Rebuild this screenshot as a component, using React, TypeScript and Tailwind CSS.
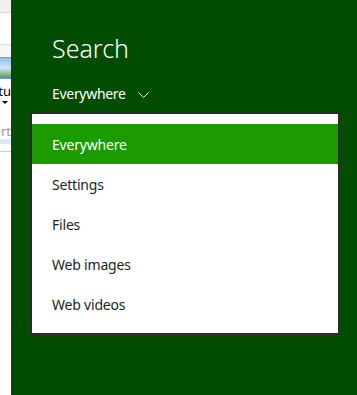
import React from 'react';

const items = ['Everywhere', 'Settings', 'Files', 'Web images', 'Web videos'];

// sliver of the desktop window behind the charm
const BackWindow: React.FC = () => (
  <div className="w-[11px] h-full shrink-0 overflow-hidden bg-white flex flex-col">
    <div className="h-[13px] bg-[#f0f0f0] border-b border-[#d9d9d9]" />
    <div className="h-[32px] bg-white border-b border-[#dcdcdc]" />
    <div className="h-[12px] bg-[#f7f7f7]" />
    <div className="h-[22px] border-y border-[#6d9ed8] bg-gradient-to-b from-[#8fc0ea] via-[#cfe4f3] to-[#5f9a4c]" />
    <div className="h-[4px]" />
    <div className="flex justify-end h-[16px]">
      <span className="whitespace-nowrap text-[13px] leading-[16px] text-black">Pictu</span>
    </div>
    <div className="flex justify-end h-[8px] pr-[3px] pt-[2px]">
      <div className="w-0 h-0 border-l-[3px] border-r-[3px] border-t-[3px] border-l-transparent border-r-transparent border-t-black" />
    </div>
    <div className="h-[16px]" />
    <div className="flex justify-end h-[16px]">
      <span className="whitespace-nowrap text-[13px] leading-[16px] text-[#9a9a9a]">Insert</span>
    </div>
    <div className="h-[5px] bg-[#dbe9f5]" />
    <div className="h-[7px]" />
    <div className="h-px bg-[#cfcfcf]" />
  </div>
);

const App: React.FC = () => {
  return (
    <div className="w-[357px] h-[395px] flex overflow-hidden" style={{ fontFamily: '"Noto Sans", sans-serif' }}>
      <BackWindow />
      <div className="flex-1 bg-[#004d00] pt-[32px]">
        <h1 className="pl-[41px] text-[25px] leading-[32px] font-light text-white">Search</h1>
        <div className="mt-[20px] pl-[41px] h-[20px] flex items-center gap-[12px] text-white">
          <span className="text-[14px] leading-[20px] tracking-[-0.3px]">Everywhere</span>
          <svg width="11" height="7" viewBox="0 0 11 7" className="mt-[2px]">
            <polyline points="0.5,0.5 5.5,5.5 10.5,0.5" fill="none" stroke="white" strokeWidth="1" />
          </svg>
        </div>
        <div className="mt-[8px] ml-[19px] w-[310px] bg-white border-2 border-[#2b2b2b] pt-[10px] pb-[9px]">
          {items.map((label, i) => (
            <div
              key={label}
              className={
                i === 0
                  ? 'h-[40px] flex items-center pl-[20px] text-[14px] tracking-[-0.2px] bg-[#1b9b00] text-white'
                  : 'h-[40px] flex items-center pl-[20px] text-[14px] tracking-[-0.2px] text-[#1e1e1e]'
              }
            >
              {label}
            </div>
          ))}
        </div>
      </div>
    </div>
  );
};

export default App;
